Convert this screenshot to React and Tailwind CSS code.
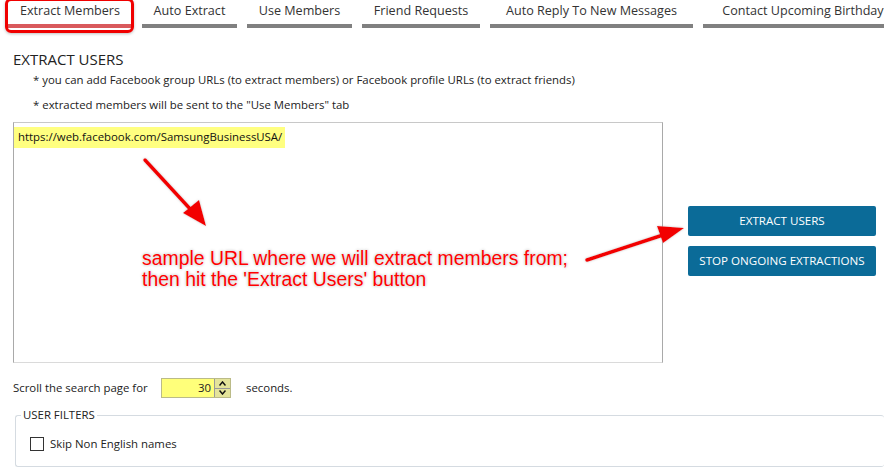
import React from "react";

const tabs = [
  { label: "Extract Members", w: "w-[124px]" },
  { label: "Auto Extract", w: "w-[95px]" },
  { label: "Use Members", w: "w-[105px]" },
  { label: "Friend Requests", w: "w-[118px]" },
  { label: "Auto Reply To New Messages", w: "w-[203px]" },
  { label: "Contact Upcoming Birthday", w: "w-[200px]" },
];

export default function App() {
  return (
    <div className="relative w-[884px] h-[474px] overflow-hidden bg-white text-[#1a1a1a] font-['Open_Sans',sans-serif]">
      {/* tabs */}
      <div className="flex gap-[10px] pl-[8px] whitespace-nowrap">
        {tabs.map((t, i) => (
          <div key={t.label} className={`${t.w} shrink-0 flex flex-col`}>
            <div className="h-[24px] flex items-center justify-center text-[12.6px] text-[#333] leading-none pb-[1px]">
              {t.label}
            </div>
            <div className={`h-[4px] ${i === 0 ? "bg-[#d9595c]" : "bg-[#808080]"}`} />
          </div>
        ))}
      </div>
      <div className="absolute left-[5px] top-[-2px] w-[129px] h-[35px] rounded-[6px] border-[3px] border-[#f00000] shadow-[0_1px_3px_rgba(0,0,0,0.25)]" />

      {/* body */}
      <div className="pl-[13px] pt-[21px]">
        <div className="text-[15px] leading-[20px] text-[#222]">EXTRACT USERS</div>
        <div className="pl-[20px] mt-[3px] text-[11.4px] leading-[16px] text-[#222]">
          * you can add Facebook group URLs (to extract members) or Facebook profile URLs (to extract friends)
        </div>
        <div className="pl-[20px] mt-[9px] text-[11.4px] leading-[16px] text-[#222]">
          * extracted members will be sent to the "Use Members" tab
        </div>

        <div className="flex items-start mt-[9px]">
          <div className="w-[650px] h-[241px] border border-[#a9a9a9] border-t-[#c8c8c8] border-b-[#dadada]">
            <div className="inline-block bg-[#ffff80] h-[21px] pl-[4px] pr-[3px] text-[11.4px] leading-[20px] text-[#111]">
              https://web.facebook.com/SamsungBusinessUSA/
            </div>
          </div>
          <div className="ml-[25px] mt-[84px] flex flex-col gap-[10px]">
            <button className="w-[188px] h-[30px] rounded-[2px] bg-[#0b6b98] text-white text-[11.6px] font-['Open_Sans',sans-serif]">
              EXTRACT USERS
            </button>
            <button className="w-[188px] h-[30px] rounded-[2px] bg-[#0b6b98] text-white text-[11.6px] font-['Open_Sans',sans-serif]">
              STOP ONGOING EXTRACTIONS
            </button>
          </div>
        </div>

        <div className="flex items-center mt-[15px] text-[11.4px] text-[#222] whitespace-nowrap">
          <span className="shrink-0 w-[134px]">Scroll the search page for</span>
          <div className="shrink-0 ml-[14px] flex items-stretch w-[70px] h-[20px] bg-[#ffff7a] border border-[#bbbb88]">
            <div className="flex-1 text-right pr-[3px] leading-[18px]">30</div>
            <div className="w-[16px] flex flex-col border-l border-[#999]">
              <div className="flex-1 flex items-center justify-center border-b border-[#999] bg-[#e4e49a]">
                <svg width="7" height="5" viewBox="0 0 7 5"><path d="M0.5 4.5 L3.5 1 L6.5 4.5" fill="none" stroke="#111" strokeWidth="1.5" /></svg>
              </div>
              <div className="flex-1 flex items-center justify-center bg-[#e4e49a]">
                <svg width="7" height="5" viewBox="0 0 7 5"><path d="M0.5 0.5 L3.5 4 L6.5 0.5" fill="none" stroke="#111" strokeWidth="1.5" /></svg>
              </div>
            </div>
          </div>
          <span className="ml-[15px]">seconds.</span>
        </div>

        <div className="relative mt-[17px] ml-[2px] h-[52px] border border-[#d5dbe1] rounded-[3px] border-r-0">
          <div className="absolute left-[5px] top-[-10px] bg-white px-[2px] text-[11.4px] leading-[18px] text-[#222]">USER FILTERS</div>
          <label className="absolute left-[14px] top-[19px] flex items-center gap-[6px] text-[11.4px] text-[#222] whitespace-nowrap">
            <span className="w-[14px] h-[14px] border border-[#333] bg-white" />
            <span>Skip Non English names</span>
          </label>
        </div>
      </div>

      {/* annotations */}
      <svg className="absolute left-0 top-0 pointer-events-none" width="884" height="474">
        <defs>
          <filter id="glow" x="-20%" y="-20%" width="140%" height="140%">
            <feDropShadow dx="0" dy="0" stdDeviation="1.2" floodColor="#888" floodOpacity="0.5" />
          </filter>
        </defs>
        <g filter="url(#glow)">
          <line x1="145" y1="160" x2="192" y2="211" stroke="#f20000" strokeWidth="3.5" strokeLinecap="round" />
          <polygon points="206,226 183,213 199,200" fill="#f20000" />
          <line x1="587" y1="260" x2="666" y2="234" stroke="#f20000" strokeWidth="3.5" strokeLinecap="round" />
          <polygon points="684,228 663,243 657,226" fill="#f20000" />
        </g>
      </svg>
      <div className="absolute left-[142px] top-[248px] text-[19.4px] leading-[21px] text-[#f00] font-['Liberation_Sans',sans-serif] whitespace-nowrap [text-shadow:0_0_2px_#fff,0_0_3px_#999]">
        <div>sample URL where we will extract members from;</div>
        <div>then hit the 'Extract Users' button</div>
      </div>
    </div>
  );
}
